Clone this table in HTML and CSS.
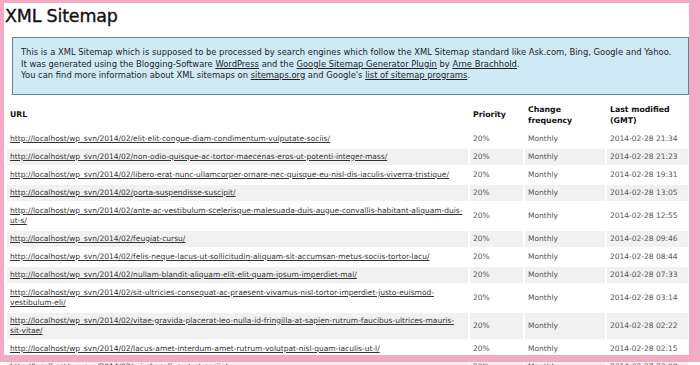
FILE: index.html
```html
<!DOCTYPE html>
<html lang="en">
<head>
<meta charset="utf-8">
<title>XML Sitemap</title>
<link rel="stylesheet" href="styles.css">
</head>
<body>
<div class="page">
  <h1 class="title">XML Sitemap</h1>
  <div class="intro">
    <p>This is a XML Sitemap which is supposed to be processed by search engines which follow the XML Sitemap standard like Ask.com, Bing, Google and Yahoo.<br>
    It was generated using the Blogging-Software <a href="#">WordPress</a> and the <a href="#">Google Sitemap Generator Plugin</a> by <a href="#">Arne Brachhold</a>.<br>
    You can find more information about XML sitemaps on <a href="#">sitemaps.org</a> and Google's <a href="#">list of sitemap programs</a>.</p>
  </div>
  <table class="sitemap">
    <thead>
      <tr>
        <th class="c-url">URL</th>
        <th class="c-pri">Priority</th>
        <th class="c-freq">Change frequency</th>
        <th class="c-mod">Last modified (GMT)</th>
      </tr>
    </thead>
    <tbody>
      <tr><td><a href="#">http://localhost/wp_svn/2014/02/elit-elit-congue-diam-condimentum-vulputate-sociis/</a></td><td>20%</td><td>Monthly</td><td>2014-02-28 21:34</td></tr>
      <tr class="alt"><td><a href="#">http://localhost/wp_svn/2014/02/non-odio-quisque-ac-tortor-maecenas-eros-ut-potenti-integer-mass/</a></td><td>20%</td><td>Monthly</td><td>2014-02-28 21:23</td></tr>
      <tr><td><a href="#">http://localhost/wp_svn/2014/02/libero-erat-nunc-ullamcorper-ornare-nec-quisque-eu-nisl-dis-iaculis-viverra-tristique/</a></td><td>20%</td><td>Monthly</td><td>2014-02-28 19:31</td></tr>
      <tr class="alt"><td><a href="#">http://localhost/wp_svn/2014/02/porta-suspendisse-suscipit/</a></td><td>20%</td><td>Monthly</td><td>2014-02-28 13:05</td></tr>
      <tr><td><a href="#">http://localhost/wp_svn/2014/02/ante-ac-vestibulum-scelerisque-malesuada-duis-augue-convallis-habitant-aliquam-duis-ut-s/</a></td><td>20%</td><td>Monthly</td><td>2014-02-28 12:55</td></tr>
      <tr class="alt"><td><a href="#">http://localhost/wp_svn/2014/02/feugiat-cursu/</a></td><td>20%</td><td>Monthly</td><td>2014-02-28 09:46</td></tr>
      <tr><td><a href="#">http://localhost/wp_svn/2014/02/felis-neque-lacus-ut-sollicitudin-aliquam-sit-accumsan-metus-sociis-tortor-lacu/</a></td><td>20%</td><td>Monthly</td><td>2014-02-28 08:44</td></tr>
      <tr class="alt"><td><a href="#">http://localhost/wp_svn/2014/02/nullam-blandit-aliquam-elit-elit-quam-ipsum-imperdiet-mal/</a></td><td>20%</td><td>Monthly</td><td>2014-02-28 07:33</td></tr>
      <tr><td><a href="#">http://localhost/wp_svn/2014/02/sit-ultricies-consequat-ac-praesent-vivamus-nisl-tortor-imperdiet-justo-euismod-vestibulum-eli/</a></td><td>20%</td><td>Monthly</td><td>2014-02-28 03:14</td></tr>
      <tr class="alt"><td><a href="#">http://localhost/wp_svn/2014/02/vitae-gravida-placerat-leo-nulla-id-fringilla-at-sapien-rutrum-faucibus-ultrices-mauris-sit-vitae/</a></td><td>20%</td><td>Monthly</td><td>2014-02-28 02:22</td></tr>
      <tr><td><a href="#">http://localhost/wp_svn/2014/02/lacus-amet-interdum-amet-rutrum-volutpat-nisl-quam-iaculis-ut-l/</a></td><td>20%</td><td>Monthly</td><td>2014-02-28 02:15</td></tr>
      <tr class="alt"><td><a href="#">http://localhost/wp_svn/2014/02/mi-phasellus-ut-et-sociis/</a></td><td>20%</td><td>Monthly</td><td>2014-02-27 23:08</td></tr>
    </tbody>
  </table>
</div>
<div class="frame"></div>
</body>
</html>
```
FILE: styles.css
```css
html, body {
  margin: 0;
  padding: 0;
  background: #ffffff;
}
body {
  font-family: "DejaVu Sans", Verdana, sans-serif;
  color: #222222;
  height: 365px;
  overflow: hidden;
}
.page {
  padding: 6px 0 0 5px;
  width: 685px;
}
.title {
  margin: 0 0 11px 0;
  font-size: 17.5px;
  line-height: 20px;
  font-weight: normal;
  color: #111111;
  letter-spacing: -0.2px;
  -webkit-text-stroke: 0.35px #111111;
}
.intro {
  margin-left: 7px;
  width: 658px;
  background: #cfe9f6;
  border: 1px solid #5f8594;
  padding: 9px 9px 12px 8px;
}
.intro p {
  margin: 0;
  font-size: 8.4px;
  line-height: 11.5px;
  color: #1e1e1e;
}
.intro a {
  color: #1e1e1e;
}
.sitemap {
  margin-top: 4px;
  border-collapse: separate;
  border-spacing: 2px;
  table-layout: fixed;
  width: 685px;
}
.sitemap th {
  text-align: left;
  font-size: 7.8px;
  line-height: 11px;
  font-weight: bold;
  color: #111111;
  padding: 3px 3px;
  vertical-align: middle;
  height: 19px;
}
.c-url { width: 455px; }
.c-pri { width: 47px; }
.c-freq { width: 74px; }
.c-mod { width: 75px; }
.sitemap td {
  font-size: 7.5px;
  line-height: 10px;
  color: #555555;
  padding: 3px 3px;
  vertical-align: middle;
}
.sitemap td a {
  color: #333333;
  text-decoration: underline;
}
.sitemap tr.alt td {
  background: #f1f1f1;
}
.frame {
  position: absolute;
  top: 0;
  left: 0;
  width: 700px;
  height: 362px;
  box-sizing: border-box;
  border-style: solid;
  border-color: #f4a9c4;
  border-width: 3px 11px 7px 4px;
  pointer-events: none;
}
```
